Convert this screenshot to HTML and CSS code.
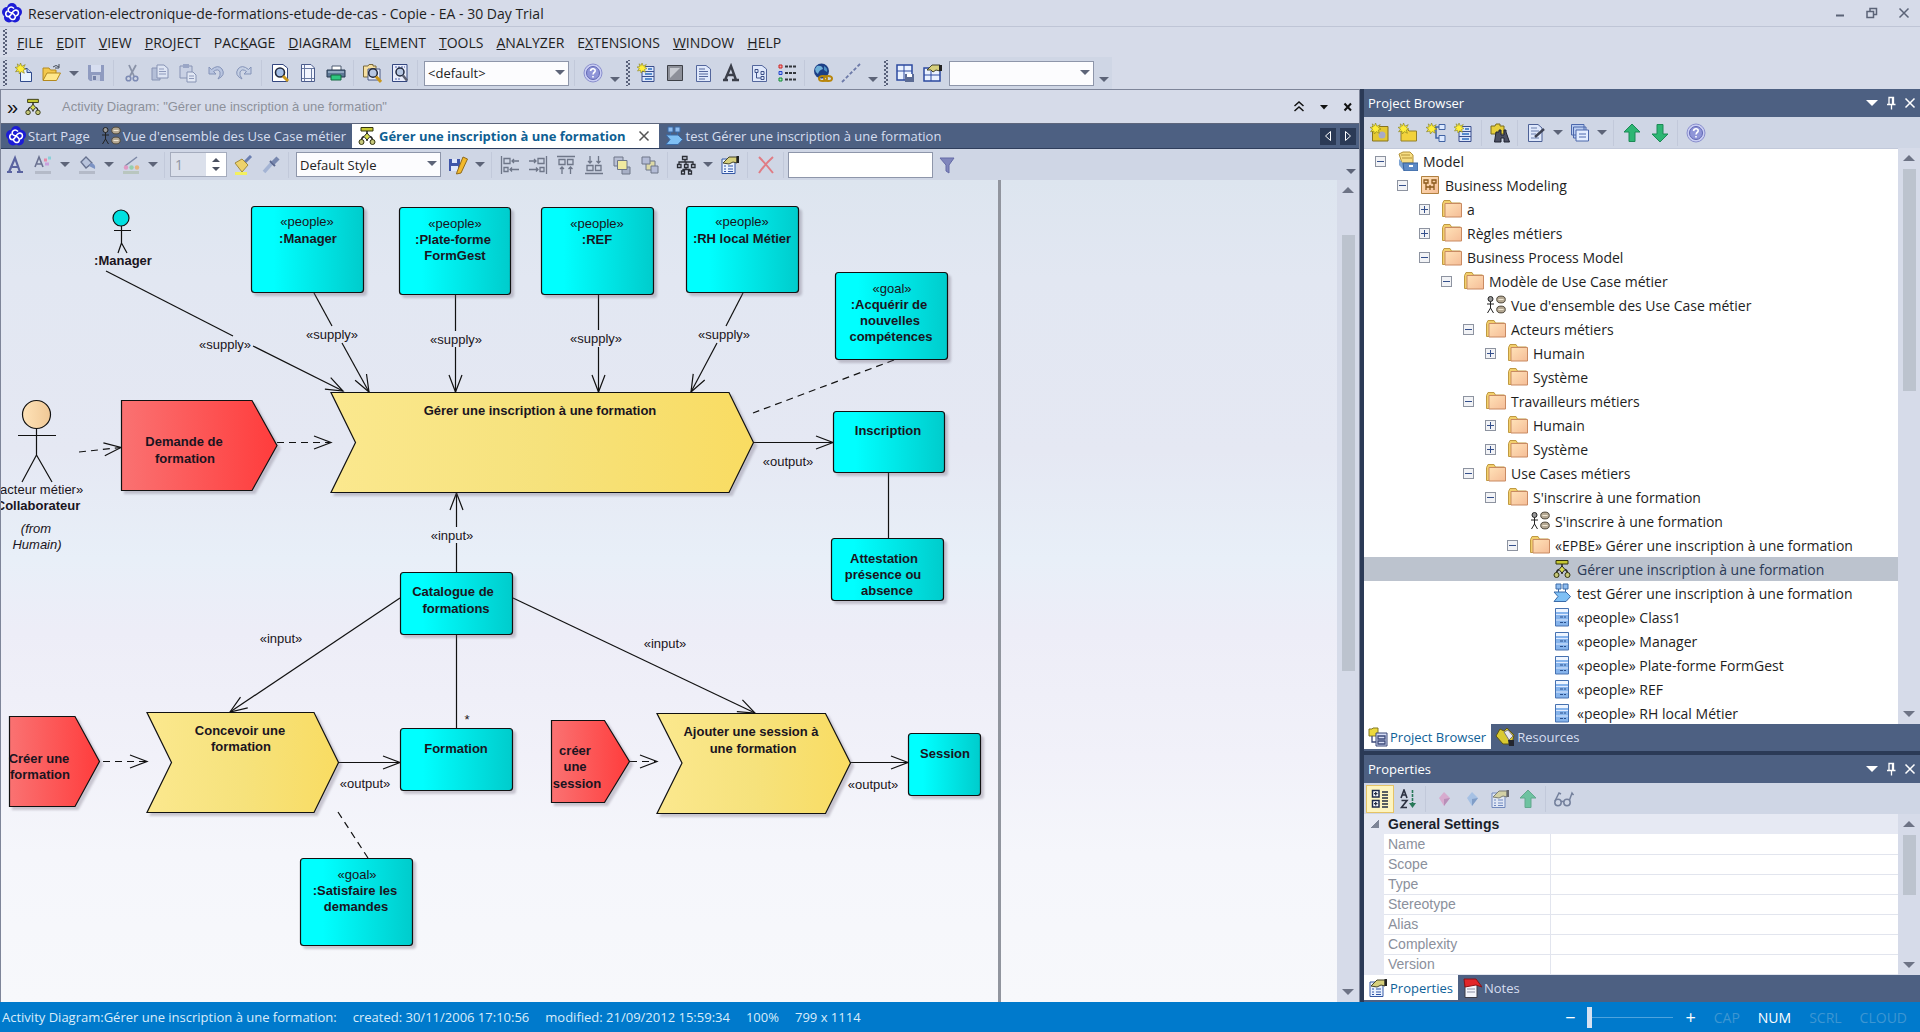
FILE: index.html
```html
<!DOCTYPE html>
<html lang="fr">
<head>
  <meta charset="UTF-8" />
  <meta name="viewport" content="width=device-width, initial-scale=1.0"/>
  <title>Reservation-electronique-de-formations-etude-de-cas - Copie - EA - 30 Day Trial</title>
  <link rel="stylesheet" href="styles.css">
</head>
<body>
  <!-- icon sprite -->
  <svg class="sprite" aria-hidden="true">
    <defs>
      <linearGradient id="gFolder" x1="0" y1="0" x2="1" y2="1">
        <stop offset="0" stop-color="#ffe2b8"/><stop offset="1" stop-color="#f5bd97"/>
      </linearGradient>
      <linearGradient id="gCyan"><stop offset="0.2" stop-color="#00ffff"/><stop offset="1" stop-color="#00cccc"/></linearGradient>
      <linearGradient id="gRed"><stop offset="0" stop-color="#fa7272"/><stop offset="1" stop-color="#ff3c3c"/></linearGradient>
      <linearGradient id="gYellow"><stop offset="0" stop-color="#fbe88e"/><stop offset="0.5" stop-color="#f6e27c"/><stop offset="1" stop-color="#f9dc62"/></linearGradient>
      <linearGradient id="gHead"><stop offset="0" stop-color="#ffe3b8"/><stop offset="1" stop-color="#f0c896"/></linearGradient>
      <marker id="arrow" markerUnits="userSpaceOnUse" markerWidth="22" markerHeight="18" refX="19" refY="8" orient="auto">
        <path d="M2 1.500L19 8L2 14.500" fill="none" stroke="#111" stroke-width="1.200"/>
      </marker>
    </defs>
    <symbol id="ea" viewBox="0 0 20 20">
      <g fill="#1c1cd6"><circle cx="10" cy="5" r="5"/><circle cx="5" cy="9" r="5"/><circle cx="15" cy="9" r="5"/><circle cx="7" cy="14.500" r="5"/><circle cx="13" cy="14.500" r="5"/></g>
      <path d="M10 10Q5 9 6.500 5.500Q9 2.500 12 5.500M10 10Q13 5.500 16 8Q17.500 11.500 14 13M10 10Q15 13 12.500 16Q9 17.500 7.500 14M10 10Q7.500 15 4.500 13Q2.500 10 5.500 8" fill="none" stroke="#fff" stroke-width="1.600"/>
    </symbol>
    <symbol id="star" viewBox="0 0 10 10">
      <path d="M5 0L6.300 3L9.300 1.500L7.700 4.300L10 5.500L7.500 6.500L8.500 9.300L5.700 7.800L4 10L3.500 7.300L.5 8L2.300 5.500L0 4L2.900 3.500L2 .8L4.200 2.500Z" fill="#ffee3a" stroke="#8a8420" stroke-width=".6"/>
    </symbol>
    <symbol id="new" viewBox="0 0 20 20">
      <path d="M6.500 5.500H13L17.500 9.500V18.500H6.500Z" fill="#e8f3ff" stroke="#2f4a8c"/><path d="M13 5.500V9.500H17.500" fill="#bcd3f2" stroke="#2f4a8c"/>
      <use href="#star" x="1" y="0" width="11" height="11"/>
    </symbol>
    <symbol id="open" viewBox="0 0 20 20">
      <path d="M1 17V5H7L8.500 7H14V10" fill="#f3c84c" stroke="#b48a1e"/><path d="M1 17.500L5 10H18.500L14.500 17.500Z" fill="#ffe88c" stroke="#b48a1e"/>
      <path d="M11 4Q14 1 17 4M17 1V5H13" fill="none" stroke="#444c58"/>
    </symbol>
    <symbol id="save" viewBox="0 0 20 20">
      <path d="M2 2H18V18H4L2 16Z" fill="#8f9bc0"/><path d="M5 2H15V9H5Z" fill="#d7def0"/><path d="M6 12H14V18H6Z" fill="#c0c8de"/><path d="M7 13H10V17H7Z" fill="#7481a8"/>
    </symbol>
    <symbol id="cut" viewBox="0 0 20 20">
      <path d="M7 2L12 13M14 2L8 13" stroke="#8a93a8" stroke-width="1.800"/><circle cx="6.500" cy="15.500" r="2.300" fill="none" stroke="#7d8bb4" stroke-width="1.600"/><circle cx="13.500" cy="15.500" r="2.300" fill="none" stroke="#7d8bb4" stroke-width="1.600"/>
    </symbol>
    <symbol id="copy" viewBox="0 0 20 20">
      <path d="M2 5H10V17H2Z" fill="#b4bfd8" stroke="#8793b4"/><path d="M7 2H14L18 5.500V15H7Z" fill="#dde4f3" stroke="#8793b4"/><path d="M9 6H14M9 8.500H16M9 11H16" stroke="#8e99bb"/>
    </symbol>
    <symbol id="paste" viewBox="0 0 20 20">
      <path d="M2 3H14V15H2Z" fill="#c9d1e4" stroke="#8793b4"/><path d="M5 1H11V5H5Z" fill="#9aa6c6"/><path d="M9 9H15L18 12V19H9Z" fill="#e2e8f4" stroke="#8793b4"/><path d="M11 13H16M11 15.500H16" stroke="#8e99bb"/>
    </symbol>
    <symbol id="undo" viewBox="0 0 20 20">
      <path d="M3 4V11H10L7.500 8.500Q12 5 14 9Q15 12 12 16Q20 12 16 6Q12 1 5.500 6.500Z" fill="#b9c5e0" stroke="#8493b8"/>
    </symbol>
    <symbol id="redo" viewBox="0 0 20 20">
      <path d="M17 4V11H10L12.500 8.500Q8 5 6 9Q5 12 8 16Q0 12 4 6Q8 1 14.500 6.500Z" fill="#c5d0e4" stroke="#8493b8"/>
    </symbol>
    <symbol id="preview" viewBox="0 0 20 20">
      <path d="M2.500 1.500H13L17.500 5V18.500H2.500Z" fill="#fff" stroke="#33467f"/><circle cx="10" cy="9.500" r="4.500" fill="#a5bfe6" stroke="#20283c" stroke-width="1.600"/><path d="M13 13L18 18" stroke="#c9971c" stroke-width="3"/>
    </symbol>
    <symbol id="page" viewBox="0 0 20 20">
      <path d="M3.500 1.500H13L16.500 5V18.500H3.500Z" fill="#f3f6ff" stroke="#4c5c8c"/><path d="M6.500 2V18M13.500 5V18M4 5.500H16M4 15.500H16" stroke="#6878a0"/>
    </symbol>
    <symbol id="print" viewBox="0 0 20 20">
      <path d="M6 3H15V8H6Z" fill="#fff" stroke="#4d5a70"/><path d="M1 7H19V14H1Z" fill="#5d7896" stroke="#26384e"/><path d="M2 9H18" stroke="#c5d8ea"/><path d="M5 12H15V17H5Z" fill="#2ec77f" stroke="#146a40"/>
    </symbol>
    <symbol id="findpkg" viewBox="0 0 20 20">
      <path d="M1.500 3H6L7 1.500H11V3H14V14H1.500Z" fill="#f6dfa0" stroke="#7a6a3c"/><path d="M6 6H18V17H6Z" fill="#e6ecfa" stroke="#4c5a84"/><circle cx="11" cy="10" r="4.300" fill="#b7c7e2" stroke="#20283c" stroke-width="1.500"/><path d="M14 13.500L19 19" stroke="#c9971c" stroke-width="3"/>
    </symbol>
    <symbol id="finddoc" viewBox="0 0 20 20">
      <path d="M2.500 1.500H17V18.500H2.500Z" fill="#e9edfb" stroke="#33467f"/><path d="M5 4H15M5 16H11" stroke="#4b5fa6" stroke-dasharray="2 1"/><circle cx="10" cy="9" r="4" fill="#b7c7e2" stroke="#20283c" stroke-width="1.500"/><path d="M13 12.500L17 17.500" stroke="#5b5f70" stroke-width="2.500"/>
    </symbol>
    <symbol id="help" viewBox="0 0 20 20">
      <circle cx="10" cy="10" r="9" fill="#c9cdf3" stroke="#8a8fce"/><circle cx="10" cy="10" r="6.500" fill="#8f95d8" stroke="#6268b4"/><path d="M7.500 8Q8 5.500 10.300 5.800Q12.700 6.200 12 8.500Q10.200 9.800 10 11.500M10 13V14.500" fill="none" stroke="#fff" stroke-width="1.600"/>
    </symbol>
    <symbol id="newel" viewBox="0 0 20 20">
      <path d="M5 3.500H17V18.500H5Z" fill="#dbe6fb" stroke="#3b4f8e"/><path d="M5 8.500H17M5 13.500H17" stroke="#3b4f8e"/><path d="M8 11H15M8 16H15M11 6H15" stroke="#2e6fc0" stroke-width="1.500"/><use href="#star" x="0" y="0" width="10" height="10"/>
    </symbol>
    <symbol id="box" viewBox="0 0 20 20"><path d="M2.500 2.500H17.500V17.500H2.500Z" fill="#8d9099" stroke="#3e4148"/><path d="M5 15V5H15Z" fill="#c8cbd2"/></symbol>
    <symbol id="doc" viewBox="0 0 20 20"><path d="M3.500 2.500H13L17.500 6V18.500H3.500Z" fill="#dfe8fb" stroke="#53669c"/><path d="M6 6H12M6 8.500H15M6 11H15M6 13.500H15M6 16H12" stroke="#53669c"/></symbol>
    <symbol id="doctree" viewBox="0 0 20 20"><path d="M3.500 2.500H13L17.500 6V18.500H3.500Z" fill="#dfe8fb" stroke="#53669c"/><path d="M6 6.500H9V9.500H6ZM12 8.500H15V11.500H12ZM12 13.500H15V16.500H12ZM7.500 10V15H12" fill="none" stroke="#3f5288"/></symbol>
    <symbol id="legend" viewBox="0 0 20 20"><path d="M2 2H5V5H2Z" fill="#f5a9a9" stroke="#c22"/><path d="M2 8.500H5V11.500H2Z" fill="#a9bdf5" stroke="#24c"/><path d="M2 15H5V18H2Z" fill="#a5e8b9" stroke="#183"/><path d="M8 3.500H19M8 10H19M8 16.500H19" stroke="#33363c" stroke-width="2.200" stroke-dasharray="3 1"/></symbol>
    <symbol id="globe" viewBox="0 0 20 20"><circle cx="8.500" cy="8" r="7.500" fill="#1c3f86"/><path d="M4 3Q9 2 10 6Q6 7 5 11Q2 9 2 6Z" fill="#6fb0d8"/><path d="M11 3Q15 5 14 9L11 7Z" fill="#4d8fc4"/><g fill="none" stroke="#b8860b" stroke-width="2"><ellipse cx="10" cy="15.500" rx="4" ry="2.500"/><ellipse cx="15" cy="15.500" rx="4" ry="2.500"/></g></symbol>
    <symbol id="dashline" viewBox="0 0 20 20"><path d="M1 19L19 1" stroke="#6d7aa8" stroke-width="1.800" stroke-dasharray="3.500 2"/></symbol>
    <symbol id="winsave" viewBox="0 0 20 20"><path d="M2 2H17V17H2Z" fill="#eaf2ff" stroke="#2c4aa0" stroke-width="1.500"/><path d="M9 2V17M2 8H17" stroke="#2c4aa0"/><path d="M10 11H19V19H10Z" fill="#5b6b94"/><path d="M12 11H17V14H12Z" fill="#fff"/></symbol>
    <symbol id="winhand" viewBox="0 0 20 20"><path d="M1 5H17V18H1Z" fill="#eaf2ff" stroke="#2c4aa0" stroke-width="1.500"/><path d="M8 8V18M1 12H17" stroke="#2c4aa0"/><path d="M4 7L9 2H17V8L13 7L10 9L8 7Z" fill="#d6cf7c" stroke="#45452c"/><path d="M16 2H19V8H16Z" fill="#222"/></symbol>
    <symbol id="hand" viewBox="0 0 20 20"><path d="M2 4H15V18.500H2Z" fill="#eaf2ff" stroke="#3558a4"/><path d="M4 11H6M8 11H13M4 14H6M8 14H13M4 16.500H6M8 16.500H13" stroke="#2e55a8"/><path d="M3 8L9 2H17V8L13 7L9 9Z" fill="#d6cf7c" stroke="#45452c"/><path d="M16.500 1H19V8H16.500Z" fill="#222"/></symbol>
    <symbol id="activity" viewBox="0 0 20 20"><path d="M4 1.500H16V5H4Z" fill="#c6c832" stroke="#33340f"/><path d="M10 5V8M7 10.500Q5 11 4.500 14M13 10.500Q15 11 15.500 14M10 13V15" fill="none" stroke="#222" stroke-width="1.500"/><path d="M10 7L13 10.500L10 14L7 10.500Z" fill="#d8dc50" stroke="#222"/><circle cx="4.500" cy="16" r="2.500" fill="#c6c87a" stroke="#33340f"/><circle cx="15.500" cy="16" r="2.500" fill="#c6c87a" stroke="#33340f"/></symbol>
    <symbol id="usecase" viewBox="0 0 20 20"><circle cx="4.500" cy="4" r="2.500" fill="#999" stroke="#222"/><path d="M4.500 6.500V13M1 9H8M4.500 13L1.500 18M4.500 13L7.500 18" stroke="#222" fill="none"/><ellipse cx="15" cy="4.500" rx="4.300" ry="3.400" fill="#b5a994" stroke="#514a3e"/><ellipse cx="15" cy="14.500" rx="4.300" ry="3.400" fill="#b5a994" stroke="#514a3e"/><path d="M12.500 4.500H17.500M12.500 14.500H17.500" stroke="#efe6d4"/></symbol>
    <symbol id="process" viewBox="0 0 20 20"><path d="M4 1H9V6H4ZM11 1H16V6H11Z" fill="#8fbdf0" stroke="#3b6ba8"/><path d="M6.500 6V9M13.500 6V9" stroke="#3b6ba8"/><path d="M2 9H14L18.500 13.500L14 18.500H2L6 13.500Z" fill="#7fc0f5" stroke="#3b6ba8"/></symbol>
    <symbol id="bigA" viewBox="0 0 20 20"><path d="M2 17H7M12 17H18M4 17L10 3L15 17M6 12H13" fill="none" stroke="#5a63a0" stroke-width="2.200"/></symbol>
    <symbol id="darkA" viewBox="0 0 20 20"><path d="M2 17H7M11 17H18M4 17L10 3L15 17M6 12H13" fill="none" stroke="#3b3f4a" stroke-width="2.400"/></symbol>
    <symbol id="fontcol" viewBox="0 0 20 20"><path d="M2 12L6 2L10 12M4 9H8.500" fill="none" stroke="#6a7190" stroke-width="1.600"/><path d="M11 5H14" stroke="#e58aa8" stroke-width="3"/><path d="M15 3H18" stroke="#8ad0d8" stroke-width="3"/><path d="M12 9H16" stroke="#c9a0dd" stroke-width="3"/><path d="M2 16H18V19H2Z" fill="#b4bac8"/></symbol>
    <symbol id="fill" viewBox="0 0 20 20"><path d="M4 7L9 2L15 8L9 13Z" fill="#b9c4dc" stroke="#66718e" stroke-width="1.300"/><path d="M14 8Q19 9 18 14L12 11Z" fill="#7c93c4"/><path d="M2 16H18V19H2Z" fill="#b4bac8"/></symbol>
    <symbol id="linecol" viewBox="0 0 20 20"><path d="M4 11L16 2" stroke="#7d88a6" stroke-width="1.500"/><circle cx="5" cy="12.500" r="2.200" fill="#e09ac4"/><circle cx="10.500" cy="12.500" r="2.200" fill="#94cfae"/><circle cx="16" cy="12.500" r="2.200" fill="#e6b37c"/><path d="M2 16H18V19H2Z" fill="#b9c6bf"/></symbol>
    <symbol id="brush" viewBox="0 0 20 20"><path d="M12 7L18 1" stroke="#6b7fb0" stroke-width="3"/><path d="M2 8L9 4L15 10L9 17Z" fill="#edd26c" stroke="#a08a3a"/><path d="M2 17H14V20H2Z" fill="#f3f060"/></symbol>
    <symbol id="dropper" viewBox="0 0 20 20"><path d="M3 17L11 8" stroke="#a4b4d4" stroke-width="3.500"/><path d="M9 6L14 11" stroke="#59668e" stroke-width="2"/><path d="M12 8L17 3" stroke="#7787ae" stroke-width="4.500"/></symbol>
    <symbol id="savestyle" viewBox="0 0 20 20"><path d="M1 4H12V16H1Z" fill="#3f55a8"/><path d="M4 4H9V8H4ZM3 11H10V16H3Z" fill="#dfe6fa"/><path d="M9 17L15 2L19.500 4L13 18L8.500 19Z" fill="#f2b92c" stroke="#90691a"/></symbol>
    <symbol id="alignl" viewBox="0 0 20 20"><path d="M1.500 1V19M4 3.500H10V8.500H4ZM4 12.500H8V16.500H4ZM12 6H19M10 14.500H19M14 4L12 6L14 8M12 12.500L10 14.500L12 16.500" fill="none" stroke="#6e7688" stroke-width="1.300"/></symbol>
    <symbol id="alignr" viewBox="0 0 20 20"><path d="M18.500 1V19M10 3.500H16V8.500H10ZM12 12.500H16V16.500H12ZM1 6H8M1 14.500H10M6 4L8 6L6 8M8 12.500L10 14.500L8 16.500" fill="none" stroke="#6e7688" stroke-width="1.300"/></symbol>
    <symbol id="alignt" viewBox="0 0 20 20"><path d="M1 1.500H19M3 4.500V9.500H9V4.500ZM11.500 4.500V9.500H17V4.500ZM6 12V19M14.500 12V19M4 14L6 12L8 14M12.500 14L14.500 12L16.500 14" fill="none" stroke="#6e7688" stroke-width="1.300"/></symbol>
    <symbol id="alignb" viewBox="0 0 20 20"><path d="M1 18.500H19M3 10.500V15.500H9V10.500ZM11.500 10.500V15.500H17V10.500ZM6 1V8M14.500 1V8M4 6L6 8L8 6M12.500 6L14.500 8L16.500 6" fill="none" stroke="#6e7688" stroke-width="1.300"/></symbol>
    <symbol id="front" viewBox="0 0 20 20"><path d="M2 2H11V11H2Z" fill="#b8bfd4" stroke="#6e7688"/><path d="M10 12H18V19H10Z" fill="#a8b0c6" stroke="#6e7688"/><path d="M5.500 5.500H15V14.500H5.500Z" fill="#f0e9a0" stroke="#6e7688"/></symbol>
    <symbol id="back" viewBox="0 0 20 20"><path d="M6 6H15V15H6Z" fill="#ddd9a6" stroke="#6e7688"/><path d="M2 2H10V9H2Z" fill="#b4bcd6" stroke="#6e7688"/><path d="M11 11H18V18H11Z" fill="#b4bcd6" stroke="#6e7688"/></symbol>
    <symbol id="layout" viewBox="0 0 20 20"><path d="M6.500 1.500H11V4.500H6.500ZM1.500 9.500H5V12.500H1.500ZM8.500 9.500H12V12.500H8.500ZM15.500 9.500H19V12.500H15.500ZM5.500 16H8.500V19H5.500ZM12.500 16H15.500V19H12.500ZM9 5V7M3 9V7H17V9M10 7V9M10 13V14.500M7 16V14.500H14V16" fill="none" stroke="#2b2e36" stroke-width="1.300"/></symbol>
    <symbol id="del" viewBox="0 0 20 20"><path d="M3 2Q9 8 17 18M17 2Q9 9 3 18" fill="none" stroke="#e07c84" stroke-width="2"/></symbol>
    <symbol id="filter" viewBox="0 0 20 20"><path d="M3 3H17L12 10V18L9 16V10Z" fill="#8086bc" stroke="#646aa6"/></symbol>
    <symbol id="model" viewBox="0 0 20 20"><path d="M1 3L5 1H12L15 4V12H4Z" fill="#f7dd82" stroke="#b39238"/><path d="M3 4H12M4 7H14" stroke="#b39238"/><path d="M1 8L6 13V20L1 14Z" fill="#7fa5d4"/><path d="M5 12H20V20H6Z" fill="#5d8ac6" stroke="#39629c"/><path d="M11 15H15" stroke="#fff" stroke-width="2"/></symbol>
    <symbol id="bizpkg" viewBox="0 0 20 20"><path d="M1.500 1.500H18.500V18.500H1.500Z" fill="url(#gFolder)" stroke="#b08040"/><path d="M4 5H8V8H4ZM12 5H16V8H12ZM6 8V15M14 8V15M6 12H14M10 10V15" fill="none" stroke="#8b5a1c" stroke-width="1.300"/></symbol>
    <symbol id="folder" viewBox="0 0 20 20"><path d="M.5 17.500V4.500L2 1.500H8L9.500 4H18.500V17.500Z" fill="#f2cf6c" stroke="#c09a42"/><path d="M3 4.500H19.500V18H3Z" fill="url(#gFolder)" stroke="#c98a62"/></symbol>
    <symbol id="class" viewBox="0 0 20 20"><path d="M3.500 1.500H16.500V19H3.500Z" fill="#86b4ec" stroke="#4671b0"/><path d="M4 2H16V5H4Z" fill="#eef5ff"/><path d="M4 7.500H16M4 13H16" stroke="#dfeaff"/><path d="M8 10H14M8 15.500H14" stroke="#2b4f8c" stroke-dasharray="3 1"/></symbol>
    <symbol id="newmodel" viewBox="0 0 20 20"><path d="M2.500 3.500H18V18H2.500Z" fill="#e4c832" stroke="#857320"/><circle cx="12" cy="12" r="3.500" fill="#a8aac8"/><use href="#star" x="0" y="0" width="11" height="11"/></symbol>
    <symbol id="newfolder" viewBox="0 0 20 20"><path d="M3 18V6H9L11 8H18.500V18Z" fill="#f2d23c" stroke="#94802a"/><use href="#star" x="0" y="0" width="11" height="11"/></symbol>
    <symbol id="newdiag" viewBox="0 0 20 20"><path d="M13 1.500H19V6.500H13ZM13 12.500H19V18.500H13Z" fill="#dce9ff" stroke="#4063a4"/><path d="M8 4H13M10 4V15H13" fill="none" stroke="#4063a4" stroke-width="1.500"/><use href="#star" x="0" y="0" width="11" height="11"/></symbol>
    <symbol id="binoc" viewBox="0 0 20 20"><path d="M1 11V3H5L6 1H10V3H14V11Z" fill="#e7cf3a" stroke="#7b6d1d"/><path d="M6 9H9V7H11V12H14V7H16V9L19.500 19H14V15H11V19H4.500Z" fill="#4b4f62" stroke="#1f2230"/></symbol>
    <symbol id="docedit" viewBox="0 0 20 20"><path d="M2.500 1.500H12L16 5V18.500H2.500Z" fill="#dfe8fb" stroke="#4d6196"/><path d="M5 5H11M5 8H13M5 11H10M5 15H13" stroke="#6b7fae"/><path d="M9 14L18 6" stroke="#3d4152" stroke-width="2.500"/></symbol>
    <symbol id="stack" viewBox="0 0 20 20"><path d="M1.500 1.500H14V12H1.500ZM3.500 4H16V15H3.500Z" fill="#b9ccf0" stroke="#4c68ac"/><path d="M6 7H18.500V18H6Z" fill="#e3edff" stroke="#4c68ac"/><path d="M9 11H16M9 14H16" stroke="#4c68ac"/></symbol>
    <symbol id="up" viewBox="0 0 20 20"><path d="M10 1L18 9H13V18.500H7V9H2Z" fill="#2db673" stroke="#1c8a56"/></symbol>
    <symbol id="down" viewBox="0 0 20 20"><path d="M10 19L18 11H13V1.500H7V11H2Z" fill="#2db673" stroke="#1c8a56"/></symbol>
    <symbol id="categ" viewBox="0 0 20 20"><path d="M2.500 1.500H9V8H2.500ZM2.500 11.500H9V18H2.500Z" fill="#fff" stroke="#1d2a4c" stroke-width="1.500"/><path d="M4 4.700H7.500M5.700 3V6.500M4 14.700H7.500M5.700 13V16.500M12 3H18M12 6H18M12 9H18M12 12H18M12 15H18M12 18H18" stroke="#222c44" stroke-width="1.300"/></symbol>
    <symbol id="sort" viewBox="0 0 20 20"><path d="M3 9L6 1L9 9M4 6H8M3.500 11.500H9L3.500 18.500H9" fill="none" stroke="#2b3040" stroke-width="1.600"/><path d="M14.500 1V17" stroke="#287858" stroke-width="1.600" stroke-dasharray="3 1"/><path d="M11 14L14.500 19L18 14Z" fill="#287858"/></symbol>
    <symbol id="pink" viewBox="0 0 20 20"><path d="M10 3L16 9L10 17L5 9Z" fill="#dd8fc0"/><path d="M10 10L16 9L10 17Z" fill="#a9609b"/></symbol>
    <symbol id="blue" viewBox="0 0 20 20"><path d="M10 3L16 9L10 17L5 9Z" fill="#8cb4e4"/><path d="M10 10L16 9L10 17Z" fill="#4c78b4"/></symbol>
    <symbol id="glasses" viewBox="0 0 20 20"><g fill="none" stroke="#74809c" stroke-width="1.500"><circle cx="4" cy="13.500" r="3.200"/><circle cx="13" cy="13.500" r="3.200"/><path d="M7 12.500H10M1 12L5 4L7 5M15.500 11L18 4L19.500 6"/></g></symbol>
    <symbol id="pbtab" viewBox="0 0 20 20"><path d="M1 9V2H4L5 1H10V9Z" fill="#ecd93c" stroke="#837825"/><path d="M8 6H19V19H8Z" fill="#d5dcf4" stroke="#3b4878"/><path d="M10 9H17V12H10ZM10 14H17V17H10ZM4 9V15H8" fill="none" stroke="#3b4878" stroke-width="1.300"/></symbol>
    <symbol id="restab" viewBox="0 0 20 20"><path d="M1 9L5 2L9 4L12 1L19 8L17 17L8 17Z" fill="#d9c930" stroke="#5c5414"/><path d="M9 5L13 3L18 9L14 13Z" fill="#e8e8ee" stroke="#777"/><path d="M13 13H19V19H14Z" fill="#23252e"/></symbol>
    <symbol id="notetab" viewBox="0 0 20 20"><path d="M3 4H15V19.500H3Z" fill="#f4f6fc" stroke="#3d3d48"/><path d="M5 11H13M5 14H13" stroke="#8a8fa4"/><path d="M2 1H14L20 9L14 7L3 9Z" fill="#e2262a" stroke="#8b1216"/></symbol>
    <symbol id="pin" viewBox="0 0 12 14"><path d="M2 8.500H10.500M4 8.500V1.500H8.500V8.500M7.500 2V8M6.500 9V13.500" fill="none" stroke="#fff" stroke-width="1.300"/></symbol>
    <symbol id="close" viewBox="0 0 12 12"><path d="M1.500 1.500L10.500 10.500M10.500 1.500L1.500 10.500" stroke="currentColor" stroke-width="1.500"/></symbol>
  </svg>

  <header class="titlebar">
    <svg class="icon"><use href="#ea"/></svg>
    <h1>Reservation-electronique-de-formations-etude-de-cas - Copie - EA - 30 Day Trial</h1>
    <div class="window-buttons">
      <button aria-label="Minimize"><svg width="12" height="12"><path d="M2 8.500H10" stroke="currentColor" stroke-width="2"/></svg></button>
      <button aria-label="Restore"><svg width="12" height="12"><path d="M1 4.500H7.500V10.500H1ZM4 4V1.500H10.500V7.500H8" fill="none" stroke="currentColor" stroke-width="1.500"/></svg></button>
      <button aria-label="Close"><svg width="12" height="12"><use href="#close"/></svg></button>
    </div>
  </header>

  <nav class="menubar">
    <span class="grip"></span>
    <a href="#"><u>F</u>ILE</a>
    <a href="#"><u>E</u>DIT</a>
    <a href="#"><u>V</u>IEW</a>
    <a href="#"><u>P</u>ROJECT</a>
    <a href="#">PAC<u>K</u>AGE</a>
    <a href="#"><u>D</u>IAGRAM</a>
    <a href="#">E<u>L</u>EMENT</a>
    <a href="#"><u>T</u>OOLS</a>
    <a href="#"><u>A</u>NALYZER</a>
    <a href="#">E<u>X</u>TENSIONS</a>
    <a href="#"><u>W</u>INDOW</a>
    <a href="#"><u>H</u>ELP</a>
  </nav>

  <div class="workspace">
    <main class="left">
      <div class="toolbar main-toolbar">
        <span class="grip"></span>
        <button aria-label="New"><svg class="icon"><use href="#new"/></svg></button>
        <button aria-label="Open"><svg class="icon"><use href="#open"/></svg></button>
        <button class="drop" aria-label="Recent files"></button>
        <button aria-label="Save"><svg class="icon"><use href="#save"/></svg></button>
        <span class="sep"></span>
        <button aria-label="Cut"><svg class="icon"><use href="#cut"/></svg></button>
        <button aria-label="Copy"><svg class="icon"><use href="#copy"/></svg></button>
        <button aria-label="Paste"><svg class="icon"><use href="#paste"/></svg></button>
        <button aria-label="Undo"><svg class="icon"><use href="#undo"/></svg></button>
        <button aria-label="Redo"><svg class="icon"><use href="#redo"/></svg></button>
        <span class="sep"></span>
        <button aria-label="Print preview"><svg class="icon"><use href="#preview"/></svg></button>
        <button aria-label="Page setup"><svg class="icon"><use href="#page"/></svg></button>
        <button aria-label="Print"><svg class="icon"><use href="#print"/></svg></button>
        <span class="sep"></span>
        <button aria-label="Find in project"><svg class="icon"><use href="#findpkg"/></svg></button>
        <button aria-label="Search"><svg class="icon"><use href="#finddoc"/></svg></button>
        <span class="sep"></span>
        <span class="combo"><select aria-label="Layout"><option>&lt;default&gt;</option></select></span>
        <span class="sep"></span>
        <button aria-label="Help"><svg class="icon"><use href="#help"/></svg></button>
        <button class="drop low" aria-label="More"></button>
        <span class="grip"></span>
        <button aria-label="New element"><svg class="icon"><use href="#newel"/></svg></button>
        <button aria-label="Boundary"><svg class="icon"><use href="#box"/></svg></button>
        <button aria-label="Note"><svg class="icon"><use href="#doc"/></svg></button>
        <button aria-label="Text"><svg class="icon"><use href="#darkA"/></svg></button>
        <button aria-label="Diagram notes"><svg class="icon"><use href="#doctree"/></svg></button>
        <button aria-label="Legend"><svg class="icon"><use href="#legend"/></svg></button>
        <span class="sep"></span>
        <button aria-label="Hyperlink"><svg class="icon"><use href="#globe"/></svg></button>
        <button aria-label="Note link"><svg class="icon"><use href="#dashline"/></svg></button>
        <button class="drop low" aria-label="More"></button>
        <span class="grip"></span>
        <button aria-label="Save layout"><svg class="icon"><use href="#winsave"/></svg></button>
        <button aria-label="Manage layouts"><svg class="icon"><use href="#winhand"/></svg></button>
        <span class="combo"><select aria-label="Workspace layout"><option></option></select></span>
        <button class="drop low" aria-label="More"></button>
      </div>

      <section class="document">
        <div class="caption">
          <span class="chevrons">»</span>
          <svg class="icon"><use href="#activity"/></svg>
          <span class="caption-text">Activity Diagram: "Gérer une inscription à une formation"</span>
          <button aria-label="Collapse"><svg width="12" height="14"><path d="M1.500 6L6 2L10.500 6M1.500 11L6 7L10.500 11" fill="none" stroke="#111" stroke-width="1.500"/></svg></button>
          <button aria-label="Menu"><svg width="12" height="12"><path d="M2 4H10L6 8.500Z" fill="#111"/></svg></button>
          <button aria-label="Close"><svg width="10" height="10"><path d="M1.500 1.500L8 8.500M8 1.500L1.500 8.500" stroke="#111" stroke-width="2"/></svg></button>
        </div>

        <div class="doc-tabs">
          <a href="#" class="tab"><svg class="icon"><use href="#ea"/></svg>Start Page</a>
          <a href="#" class="tab"><svg class="icon"><use href="#usecase"/></svg>Vue d'ensemble des Use Case métier</a>
          <a href="#" class="tab active"><svg class="icon"><use href="#activity"/></svg>Gérer une inscription à une formation<svg class="tab-close"><use href="#close"/></svg></a>
          <a href="#" class="tab"><svg class="icon"><use href="#process"/></svg>test Gérer une inscription à une formation</a>
          <div class="tab-nav">
            <button aria-label="Previous tab"><svg width="10" height="12"><path d="M7.500 1.500V10.500L2.500 6Z" fill="none" stroke="#fff"/></svg></button>
            <button aria-label="Next tab"><svg width="10" height="12"><path d="M2.500 1.500V10.500L7.500 6Z" fill="none" stroke="#fff"/></svg></button>
          </div>
        </div>

        <div class="toolbar diagram-toolbar">
          <button aria-label="Font"><svg class="icon"><use href="#bigA"/></svg></button>
          <button aria-label="Font color"><svg class="icon"><use href="#fontcol"/></svg></button>
          <button class="drop" aria-label="Font color options"></button>
          <button aria-label="Fill color"><svg class="icon"><use href="#fill"/></svg></button>
          <button class="drop" aria-label="Fill color options"></button>
          <button aria-label="Line color"><svg class="icon"><use href="#linecol"/></svg></button>
          <button class="drop" aria-label="Line color options"></button>
          <span class="sep"></span>
          <span class="spin"><input type="text" value="1" aria-label="Line width"><span class="spin-arrows"></span></span>
          <button aria-label="Apply style"><svg class="icon"><use href="#brush"/></svg></button>
          <button aria-label="Pick style"><svg class="icon"><use href="#dropper"/></svg></button>
          <span class="sep"></span>
          <span class="combo"><select aria-label="Style"><option>Default Style</option></select></span>
          <button aria-label="Save style"><svg class="icon"><use href="#savestyle"/></svg></button>
          <button class="drop" aria-label="Save style options"></button>
          <span class="sep"></span>
          <button aria-label="Align left"><svg class="icon"><use href="#alignl"/></svg></button>
          <button aria-label="Align right"><svg class="icon"><use href="#alignr"/></svg></button>
          <button aria-label="Align top"><svg class="icon"><use href="#alignt"/></svg></button>
          <button aria-label="Align bottom"><svg class="icon"><use href="#alignb"/></svg></button>
          <button aria-label="Bring to front"><svg class="icon"><use href="#front"/></svg></button>
          <button aria-label="Send to back"><svg class="icon"><use href="#back"/></svg></button>
          <span class="sep"></span>
          <button aria-label="Auto layout"><svg class="icon"><use href="#layout"/></svg></button>
          <button class="drop" aria-label="Layout options"></button>
          <button aria-label="Diagram properties"><svg class="icon"><use href="#hand"/></svg></button>
          <span class="sep"></span>
          <button aria-label="Delete"><svg class="icon"><use href="#del"/></svg></button>
          <span class="sep"></span>
          <input type="text" class="filter-box" aria-label="Filter">
          <button aria-label="Apply filter"><svg class="icon"><use href="#filter"/></svg></button>
          <button class="drop low last" aria-label="More"></button>
        </div>

        <div class="canvas-row">
          <div class="canvas">
            <svg class="diagram">
              <g transform="translate(-1 -180)">
                <path class="page-edge" d="M999.500 180V2000"/>

                <!-- connectors -->
                <g class="link">
                  <path d="M106 271L233 336"/>
                  <path d="M253 346L343 391" marker-end="url(#arrow)"/>
                  <path d="M314 293L332 326"/>
                  <path d="M342 343L369 392" marker-end="url(#arrow)"/>
                  <path d="M455.500 295V331"/>
                  <path d="M455.500 347V392" marker-end="url(#arrow)"/>
                  <path d="M598.500 295V330"/>
                  <path d="M598.500 347V392" marker-end="url(#arrow)"/>
                  <path d="M743 293L726 326"/>
                  <path d="M717 343L691 392" marker-end="url(#arrow)"/>
                  <path d="M754 442.500H833" marker-end="url(#arrow)"/>
                  <path d="M888.500 473V538"/>
                  <path d="M456.500 572V543"/>
                  <path d="M456.500 527V493" marker-end="url(#arrow)"/>
                  <path d="M456.500 635V728"/>
                  <path d="M400 598L230 712" marker-end="url(#arrow)"/>
                  <path d="M513 598L755 713" marker-end="url(#arrow)"/>
                  <path d="M338 762.500H400" marker-end="url(#arrow)"/>
                  <path d="M850 762.500H908" marker-end="url(#arrow)"/>
                </g>
                <g class="link dashed">
                  <path d="M79 452L121 447.500" marker-end="url(#arrow)"/>
                  <path d="M277 442.500H331" marker-end="url(#arrow)"/>
                  <path d="M103 761.500H147" marker-end="url(#arrow)"/>
                  <path d="M630 761.500H657" marker-end="url(#arrow)"/>
                  <path d="M894 360L753 413"/>
                  <path d="M338 812L368 858"/>
                </g>

                <!-- actors -->
                <g class="actor">
                  <circle cx="121" cy="218" r="8" fill="#00e0e0"/>
                  <path d="M121.500 226V243M114 230.500H131M121.500 243L118 253M121.500 243L127 253"/>
                  <circle cx="36.500" cy="414.500" r="14" fill="url(#gHead)"/>
                  <path d="M36.500 428V455M18 435.500H56M36.500 455L22 482M36.500 455L52 482"/>
                </g>

                <!-- objects -->
                <g class="node" fill="url(#gCyan)">
                  <rect x="251.500" y="206.500" width="112" height="86" rx="3"/>
                  <rect x="399.500" y="207.500" width="111" height="87" rx="3"/>
                  <rect x="541.500" y="207.500" width="112" height="87" rx="3"/>
                  <rect x="686.500" y="206.500" width="112" height="86" rx="3"/>
                  <rect x="835.500" y="272.500" width="112" height="87" rx="3"/>
                  <rect x="833.500" y="411.500" width="111" height="61" rx="3"/>
                  <rect x="831.500" y="538.500" width="112" height="62" rx="3"/>
                  <rect x="400.500" y="572.500" width="112" height="62" rx="3"/>
                  <rect x="400.500" y="728.500" width="112" height="62" rx="3"/>
                  <rect x="300.500" y="858.500" width="112" height="87" rx="3"/>
                  <rect x="908.500" y="733.500" width="72" height="62" rx="3"/>
                </g>

                <!-- events and processes -->
                <g class="node" fill="url(#gRed)">
                  <path d="M121.500 400.500H252L277 445.500L252 490.500H121.500Z"/>
                  <path d="M9.500 716.500H75L99.500 761.500L75 806.500H9.500Z"/>
                  <path d="M551.500 720.500H604.500L629.500 761.500L604.500 802.500H551.500Z"/>
                </g>
                <g class="node" fill="url(#gYellow)">
                  <path d="M331 392.500H729L753.500 442.500L729 492.500H331L355.500 442.500Z"/>
                  <path d="M147 712.500H314L338.500 762.500L314 812.500H147L171.500 762.500Z"/>
                  <path d="M657 713.500H825.500L850.500 763L825.500 813.500H657L682 763Z"/>
                </g>

                <g class="label">
                  <text x="307" y="226">«people»</text>
                  <text x="455" y="228">«people»</text>
                  <text x="597" y="228">«people»</text>
                  <text x="742" y="226">«people»</text>
                  <text x="892" y="293">«goal»</text>
                  <text x="357" y="879">«goal»</text>
                  <text x="225" y="349">«supply»</text>
                  <text x="332" y="339">«supply»</text>
                  <text x="456" y="344">«supply»</text>
                  <text x="596" y="343">«supply»</text>
                  <text x="724" y="339">«supply»</text>
                  <text x="788" y="466">«output»</text>
                  <text x="365" y="788">«output»</text>
                  <text x="873" y="789">«output»</text>
                  <text x="452" y="540">«input»</text>
                  <text x="281" y="643">«input»</text>
                  <text x="665" y="648">«input»</text>
                  <text x="467" y="724">*</text>
                  <text x="38" y="494">«acteur métier»</text>
                  <text x="36" y="533" class="from">(from</text>
                  <text x="37" y="549" class="from">Humain)</text>
                </g>
                <g class="label name">
                  <text x="123" y="265">:Manager</text>
                  <text x="308" y="243">:Manager</text>
                  <text x="453" y="244">:Plate-forme</text>
                  <text x="455" y="260">FormGest</text>
                  <text x="597" y="244">:REF</text>
                  <text x="742" y="243">:RH local Métier</text>
                  <text x="889" y="309">:Acquérir de</text>
                  <text x="890" y="325">nouvelles</text>
                  <text x="891" y="341">compétences</text>
                  <text x="888" y="435">Inscription</text>
                  <text x="884" y="563">Attestation</text>
                  <text x="883" y="579">présence ou</text>
                  <text x="887" y="595">absence</text>
                  <text x="453" y="596">Catalogue de</text>
                  <text x="456" y="613">formations</text>
                  <text x="456" y="753">Formation</text>
                  <text x="355" y="895">:Satisfaire les</text>
                  <text x="356" y="911">demandes</text>
                  <text x="945" y="758">Session</text>
                  <text x="184" y="446">Demande de</text>
                  <text x="185" y="463">formation</text>
                  <text x="540" y="415">Gérer une inscription à une formation</text>
                  <text x="39" y="763">Créer une</text>
                  <text x="40" y="779">formation</text>
                  <text x="240" y="735">Concevoir une</text>
                  <text x="241" y="751">formation</text>
                  <text x="575" y="755">créer</text>
                  <text x="575" y="771">une</text>
                  <text x="577" y="788">session</text>
                  <text x="751" y="736">Ajouter une session à</text>
                  <text x="753" y="753">une formation</text>
                  <text x="38" y="510">Collaborateur</text>
                </g>
              </g>
            </svg>
          </div>
          <div class="scrollbar canvas-scroll"><span class="thumb"></span></div>
        </div>
      </section>
    </main>

    <aside class="side">
      <section class="panel browser">
        <header class="panel-title">
          <h2>Project Browser</h2>
          <button aria-label="Menu"><svg width="12" height="12"><path d="M0 3H12L6 9Z" fill="#fff"/></svg></button>
          <button aria-label="Pin"><svg width="12" height="14"><use href="#pin"/></svg></button>
          <button aria-label="Close"><svg width="12" height="12"><use href="#close"/></svg></button>
        </header>
        <div class="toolbar">
          <button aria-label="New model"><svg class="icon"><use href="#newmodel"/></svg></button>
          <button aria-label="New package"><svg class="icon"><use href="#newfolder"/></svg></button>
          <button aria-label="New diagram"><svg class="icon"><use href="#newdiag"/></svg></button>
          <button aria-label="New element"><svg class="icon"><use href="#newel"/></svg></button>
          <span class="sep"></span>
          <button aria-label="Find"><svg class="icon"><use href="#binoc"/></svg></button>
          <span class="sep"></span>
          <button aria-label="Documentation"><svg class="icon"><use href="#docedit"/></svg></button>
          <button class="drop" aria-label="Documentation options"></button>
          <button aria-label="Packages"><svg class="icon"><use href="#stack"/></svg></button>
          <button class="drop" aria-label="Package options"></button>
          <span class="sep"></span>
          <button aria-label="Move up"><svg class="icon"><use href="#up"/></svg></button>
          <button aria-label="Move down"><svg class="icon"><use href="#down"/></svg></button>
          <span class="sep"></span>
          <button aria-label="Help"><svg class="icon"><use href="#help"/></svg></button>
        </div>
        <div class="scroll-row tree-row">
          <ul class="tree">
            <li class="l0"><i class="box minus"></i><svg class="icon"><use href="#model"/></svg>Model</li>
            <li class="l1"><i class="box minus"></i><svg class="icon"><use href="#bizpkg"/></svg>Business Modeling</li>
            <li class="l2"><i class="box plus"></i><svg class="icon"><use href="#folder"/></svg>a</li>
            <li class="l2"><i class="box plus"></i><svg class="icon"><use href="#folder"/></svg>Règles métiers</li>
            <li class="l2"><i class="box minus"></i><svg class="icon"><use href="#folder"/></svg>Business Process Model</li>
            <li class="l3"><i class="box minus"></i><svg class="icon"><use href="#folder"/></svg>Modèle de Use Case métier</li>
            <li class="l4"><i class="box none"></i><svg class="icon"><use href="#usecase"/></svg>Vue d'ensemble des Use Case métier</li>
            <li class="l4"><i class="box minus"></i><svg class="icon"><use href="#folder"/></svg>Acteurs métiers</li>
            <li class="l5"><i class="box plus"></i><svg class="icon"><use href="#folder"/></svg>Humain</li>
            <li class="l5"><i class="box none"></i><svg class="icon"><use href="#folder"/></svg>Système</li>
            <li class="l4"><i class="box minus"></i><svg class="icon"><use href="#folder"/></svg>Travailleurs métiers</li>
            <li class="l5"><i class="box plus"></i><svg class="icon"><use href="#folder"/></svg>Humain</li>
            <li class="l5"><i class="box plus"></i><svg class="icon"><use href="#folder"/></svg>Système</li>
            <li class="l4"><i class="box minus"></i><svg class="icon"><use href="#folder"/></svg>Use Cases métiers</li>
            <li class="l5"><i class="box minus"></i><svg class="icon"><use href="#folder"/></svg>S'inscrire à une formation</li>
            <li class="l6"><i class="box none"></i><svg class="icon"><use href="#usecase"/></svg>S'inscrire à une formation</li>
            <li class="l6"><i class="box minus"></i><svg class="icon"><use href="#folder"/></svg>«EPBE» Gérer une inscription à une formation</li>
            <li class="l7 selected"><i class="box none"></i><svg class="icon"><use href="#activity"/></svg>Gérer une inscription à une formation</li>
            <li class="l7"><i class="box none"></i><svg class="icon"><use href="#process"/></svg>test Gérer une inscription à une formation</li>
            <li class="l7"><i class="box none"></i><svg class="icon"><use href="#class"/></svg>«people» Class1</li>
            <li class="l7"><i class="box none"></i><svg class="icon"><use href="#class"/></svg>«people» Manager</li>
            <li class="l7"><i class="box none"></i><svg class="icon"><use href="#class"/></svg>«people» Plate-forme FormGest</li>
            <li class="l7"><i class="box none"></i><svg class="icon"><use href="#class"/></svg>«people» REF</li>
            <li class="l7"><i class="box none"></i><svg class="icon"><use href="#class"/></svg>«people» RH local Métier</li>
          </ul>
          <div class="scrollbar tree-scroll"><span class="thumb"></span></div>
        </div>
        <div class="panel-tabs">
          <a href="#" class="active"><svg class="icon"><use href="#pbtab"/></svg>Project Browser</a>
          <a href="#"><svg class="icon"><use href="#restab"/></svg>Resources</a>
        </div>
      </section>

      <section class="panel properties">
        <header class="panel-title">
          <h2>Properties</h2>
          <button aria-label="Menu"><svg width="12" height="12"><path d="M0 3H12L6 9Z" fill="#fff"/></svg></button>
          <button aria-label="Pin"><svg width="12" height="14"><use href="#pin"/></svg></button>
          <button aria-label="Close"><svg width="12" height="12"><use href="#close"/></svg></button>
        </header>
        <div class="toolbar">
          <button class="pressed" aria-label="Categorized"><svg class="icon"><use href="#categ"/></svg></button>
          <button aria-label="Alphabetical"><svg class="icon"><use href="#sort"/></svg></button>
          <span class="sep"></span>
          <button class="dim" aria-label="Attributes"><svg class="icon"><use href="#pink"/></svg></button>
          <button class="dim" aria-label="Operations"><svg class="icon"><use href="#blue"/></svg></button>
          <button class="dim" aria-label="Element properties"><svg class="icon"><use href="#hand"/></svg></button>
          <button class="dim" aria-label="Parent"><svg class="icon"><use href="#up"/></svg></button>
          <span class="sep"></span>
          <button aria-label="View"><svg class="icon"><use href="#glasses"/></svg></button>
        </div>
        <div class="scroll-row grid-row">
          <table class="prop-grid">
            <tr class="group"><td><span class="twisty"></span></td><th colspan="2">General Settings</th></tr>
            <tr><td></td><th>Name</th><td></td></tr>
            <tr><td></td><th>Scope</th><td></td></tr>
            <tr><td></td><th>Type</th><td></td></tr>
            <tr><td></td><th>Stereotype</th><td></td></tr>
            <tr><td></td><th>Alias</th><td></td></tr>
            <tr><td></td><th>Complexity</th><td></td></tr>
            <tr><td></td><th>Version</th><td></td></tr>
          </table>
          <div class="scrollbar grid-scroll"><span class="thumb"></span></div>
        </div>
        <div class="panel-tabs">
          <a href="#" class="active"><svg class="icon"><use href="#hand"/></svg>Properties</a>
          <a href="#"><svg class="icon"><use href="#notetab"/></svg>Notes</a>
        </div>
      </section>
    </aside>
  </div>

  <footer class="statusbar">
    <span>Activity Diagram:Gérer une inscription à une formation:</span>
    <span>created: 30/11/2006 17:10:56</span>
    <span>modified: 21/09/2012 15:59:34</span>
    <span>100%</span>
    <span>799 x 1114</span>
    <div class="zoom">
      <button aria-label="Zoom out">−</button>
      <input type="range" min="0" max="100" value="0" aria-label="Zoom">
      <button aria-label="Zoom in">+</button>
    </div>
    <span class="key">CAP</span>
    <span class="key on">NUM</span>
    <span class="key">SCRL</span>
    <span class="key">CLOUD</span>
  </footer>
</body>
</html>
```
FILE: styles.css
```css
* {
  box-sizing: border-box;
  margin: 0;
  padding: 0;
}

body {
  display: flex;
  flex-direction: column;
  height: 100vh;
  overflow: hidden;
  background: #d6dbe9;
  color: #1e1e1e;
  font-family: "Open Sans", "Noto Sans", sans-serif;
  font-size: 14px;
}

button {
  border: none;
  background: none;
  color: inherit;
  font: inherit;
}

a {
  color: inherit;
  text-decoration: none;
}

.sprite {
  position: absolute;
  width: 0;
  height: 0;
}

.icon {
  width: 20px;
  height: 20px;
  flex: none;
}

/* Title and menu */
.titlebar {
  display: flex;
  align-items: center;
  gap: 6px;
  height: 27px;
  padding: 0 10px 0 2px;
  border-bottom: 1px solid #bfc5d6;
}

.titlebar h1 {
  font-size: 14px;
  font-weight: normal;
}

.window-buttons {
  display: flex;
  gap: 20px;
  margin-left: auto;
  color: #5b6377;
}

.window-buttons svg,
.panel-title svg {
  display: block;
}

.menubar {
  display: flex;
  align-items: center;
  gap: 13px;
  height: 30px;
}

.menubar .grip {
  margin-right: -6px;
}

.grip {
  flex: none;
  width: 10px;
  height: 26px;
  background: radial-gradient(circle, #59617a 1px, transparent 1px) 2px 0 / 4px 4px repeat-y,
              radial-gradient(circle, #59617a 1px, transparent 1px) 4px 2px / 4px 4px repeat-y;
}

/* Toolbars */
.toolbar {
  display: flex;
  align-items: center;
  height: 31px;
  background: #cfd6e5;
  flex: none;
}

.toolbar button {
  display: flex;
  align-items: center;
  justify-content: center;
  width: 28px;
  height: 28px;
  flex: none;
}

.toolbar .drop {
  width: 16px;
}

.drop::after {
  content: "";
  border: 5px solid transparent;
  border-top-color: #5d6478;
  border-bottom: none;
}

.toolbar .low {
  align-items: flex-end;
  padding-bottom: 5px;
}

.toolbar .last {
  margin-left: auto;
}

.toolbar .pressed {
  background: #fdf4bf;
  border: 1px solid #e5c365;
}

.toolbar .dim {
  opacity: 0.6;
}

.sep {
  width: 1px;
  height: 26px;
  margin: 0 4px 0 3px;
  background: #c2c9da;
  flex: none;
}

.combo {
  position: relative;
  width: 145px;
  height: 25px;
  margin: 0 2px;
  flex: none;
}

.combo select {
  appearance: none;
  width: 100%;
  height: 100%;
  padding: 0 3px;
  border: 1px solid #8e96aa;
  background: #fcfcfe;
  color: #222;
  font: inherit;
  font-size: 13px;
}

.combo::after {
  content: "";
  position: absolute;
  right: 4px;
  top: 9px;
  border: 5px solid transparent;
  border-top-color: #5d6478;
  border-bottom: none;
}

.spin {
  display: flex;
  width: 57px;
  height: 25px;
  margin: 0 2px 0 1px;
  border: 1px solid #a5acbd;
  flex: none;
}

.spin input {
  width: 35px;
  padding-left: 4px;
  border: none;
  background: #dbe0eb;
  color: #8f95a3;
  font: inherit;
}

.spin-arrows {
  display: flex;
  flex-direction: column;
  align-items: center;
  justify-content: center;
  gap: 5px;
  flex: 1;
  background: #fff;
}

.spin-arrows::before,
.spin-arrows::after {
  content: "";
  border: 4px solid transparent;
}

.spin-arrows::before {
  border-bottom-color: #4a5060;
  border-top: none;
}

.spin-arrows::after {
  border-top-color: #4a5060;
  border-bottom: none;
}

.filter-box {
  width: 145px;
  height: 26px;
  border: 1px solid #8e96aa;
  background: #fff;
}

/* Main split */
.workspace {
  display: flex;
  flex: 1;
  min-height: 0;
}

.left {
  display: flex;
  flex-direction: column;
  flex: 1;
  min-width: 0;
}

.main-toolbar {
  align-self: flex-start;
  height: 32px;
}

.diagram-toolbar .combo {
  margin: 0 3px;
}

.document {
  display: flex;
  flex-direction: column;
  flex: 1;
  min-height: 0;
  border: 1px solid #7e8599;
  border-bottom: none;
}

.caption {
  display: flex;
  align-items: center;
  height: 33px;
  padding: 0 6px;
  font-family: "Liberation Sans", Arial, sans-serif;
  font-size: 13px;
  flex: none;
}

.caption .icon {
  width: 18px;
  height: 18px;
}

.chevrons {
  width: 17px;
  color: #111;
  font-size: 20px;
  line-height: 20px;
}

.caption-text {
  margin: 0 auto 0 20px;
  color: #8d919b;
}

.caption button {
  display: flex;
  margin-left: 13px;
}

.doc-tabs {
  display: flex;
  height: 26px;
  background: #4d6082;
  border-top: 1px solid #5d667c;
  border-bottom: 1px solid #2f3e5c;
  color: #d6def0;
  font-size: 13px;
  flex: none;
}

.tab {
  display: flex;
  align-items: center;
  gap: 2px;
  padding: 0 6px 0 5px;
  white-space: nowrap;
}

.tab.active {
  background: #fff;
  color: #0e5f93;
  font-weight: bold;
}

.tab-close {
  width: 12px;
  height: 12px;
  margin: 0 3px 0 10px;
  color: #555;
}

.tab-nav {
  display: flex;
  align-items: center;
  gap: 4px;
  margin-left: auto;
  padding-right: 3px;
}

.tab-nav button {
  display: flex;
  align-items: center;
  justify-content: center;
  width: 16px;
  height: 17px;
  background: #2b3a56;
}

/* Diagram */
.canvas-row,
.scroll-row {
  display: flex;
  min-height: 0;
}

.canvas-row {
  flex: 1;
}

.canvas {
  flex: 1;
  overflow: hidden;
  background: linear-gradient(#dde5ef, #e2e7f2 12%, #e5e8f3 33%, #e8eff8 46%, #ededf7 55%, #f1f1f9 70%, #f5f6fb 82%, #f7f8fb);
}

.diagram {
  display: block;
  width: 100%;
  height: 100%;
}

.page-edge {
  stroke: #91959e;
  stroke-width: 3;
}

.link {
  fill: none;
  stroke: #111;
  stroke-width: 1.200;
}

.dashed {
  stroke-dasharray: 7 5;
}

.actor {
  stroke: #111;
  stroke-width: 1.200;
}

.node {
  stroke: #111;
  stroke-width: 1.200;
}

.node > * {
  filter: drop-shadow(3px 3px 1px rgba(100, 90, 110, 0.3));
}

.label {
  fill: #1a1420;
  font-family: "Liberation Sans", Arial, sans-serif;
  font-size: 13px;
  text-anchor: middle;
}

.name {
  font-weight: bold;
}

.from {
  font-style: italic;
}

/* Scrollbars */
.scrollbar {
  display: flex;
  flex-direction: column;
  align-items: center;
  width: 22px;
  padding: 7px 0;
  background: #d6dbe9;
  flex: none;
}

.scrollbar::before,
.scrollbar::after {
  content: "";
  border: 6px solid transparent;
}

.scrollbar::before {
  border-bottom-color: #6d7385;
  border-top: none;
}

.scrollbar::after {
  margin-top: auto;
  border-top-color: #6d7385;
  border-bottom: none;
}

.thumb {
  width: 13px;
  background: #bcc3ce;
}

.canvas-scroll .thumb {
  height: 54%;
  margin-top: 42px;
}

.tree-scroll .thumb {
  height: 222px;
  margin-top: 8px;
}

.grid-scroll .thumb {
  height: 60px;
  margin-top: 8px;
}

/* Side panels */
.side {
  display: flex;
  flex-direction: column;
  gap: 4px;
  width: 560px;
  margin-top: 32px;
  border-left: 4px solid #2b3a56;
  background: #2b3a56;
  flex: none;
}

.side .toolbar {
  padding-left: 2px;
}

.panel {
  display: flex;
  flex-direction: column;
  background: #d6dbe9;
}

.browser {
  flex: 1;
  min-height: 0;
}

.panel-title {
  display: flex;
  align-items: center;
  gap: 7px;
  height: 28px;
  padding: 0 4px;
  background: #4d6082;
  color: #fff;
  flex: none;
}

.panel-title h2 {
  margin-right: auto;
  font-size: 13px;
  font-weight: normal;
}

.tree-row {
  flex: 1;
}

.tree {
  flex: 1;
  overflow: hidden;
  border-top: 1px solid #c2c9da;
  background: #fff;
  list-style: none;
}

.tree li {
  display: flex;
  align-items: center;
  height: 24px;
  padding-left: 11px;
  white-space: nowrap;
}

.tree .icon {
  margin: 0 5px 0 12px;
}

.tree .l1 { padding-left: 33px; }
.tree .l2 { padding-left: 55px; }
.tree .l3 { padding-left: 77px; }
.tree .l4 { padding-left: 99px; }
.tree .l5 { padding-left: 121px; }
.tree .l6 { padding-left: 143px; }
.tree .l7 { padding-left: 165px; }

.tree .selected {
  background: #bcc3ce;
  color: #2b3a56;
}

.box {
  width: 11px;
  height: 11px;
  border: 1px solid #8d93a0;
  flex: none;
}

.minus {
  background: linear-gradient(#35508c, #35508c) center / 7px 1px no-repeat, #f2f3f6;
}

.plus {
  background: linear-gradient(#35508c, #35508c) center / 7px 1px no-repeat,
              linear-gradient(#35508c, #35508c) center / 1px 7px no-repeat, #f2f3f6;
}

.box.none {
  visibility: hidden;
}

.panel-tabs {
  display: flex;
  height: 27px;
  padding-bottom: 2px;
  background: #4d6082;
  color: #d6def0;
  font-size: 13px;
  flex: none;
}

.panel-tabs a {
  display: flex;
  align-items: center;
  gap: 2px;
  padding: 0 5px 0 4px;
}

.panel-tabs .active {
  background: #fff;
  color: #0e6198;
}

.grid-row {
  height: 161px;
  overflow: hidden;
}

.prop-grid {
  flex: 1;
  border-collapse: collapse;
  table-layout: fixed;
  background: #fff;
  color: #8b909c;
  font-family: "Liberation Sans", Arial, sans-serif;
  font-size: 14px;
}

.prop-grid tr {
  height: 20px;
}

.prop-grid th {
  width: 166px;
  padding-left: 4px;
  border-bottom: 1px solid #e2e5ee;
  font-weight: normal;
  text-align: left;
}

.prop-grid td {
  border-bottom: 1px solid #e2e5ee;
  border-left: 1px solid #e2e5ee;
}

.prop-grid td:first-child {
  width: 20px;
  border: none;
  background: #e6e9f3;
}

.prop-grid .group th {
  border: none;
  background: #e6e9f3;
  color: #1b1f2a;
  font-size: 14px;
  font-weight: bold;
}

.twisty {
  display: block;
  width: 8px;
  height: 8px;
  margin-left: 7px;
  background: linear-gradient(135deg, transparent 50%, #7e8596 50%);
}

/* Status bar */
.statusbar {
  display: flex;
  align-items: center;
  gap: 16px;
  height: 30px;
  padding: 0 13px 0 2px;
  background: #007acc;
  color: #d9ecfa;
  font-size: 13px;
  flex: none;
}

.zoom {
  display: flex;
  align-items: center;
  gap: 12px;
  margin-left: auto;
  color: #fff;
  font-size: 18px;
}

.zoom input {
  appearance: none;
  width: 86px;
  height: 21px;
  background: linear-gradient(#4ea3dd, #4ea3dd) center / 100% 1px no-repeat;
}

.zoom input::-webkit-slider-thumb {
  appearance: none;
  width: 5px;
  height: 21px;
  background: #d6e2f2;
}

.key {
  margin-left: 2px;
  color: #3d96d2;
  font-size: 14px;
}

.key.on {
  color: #fff;
}
```
